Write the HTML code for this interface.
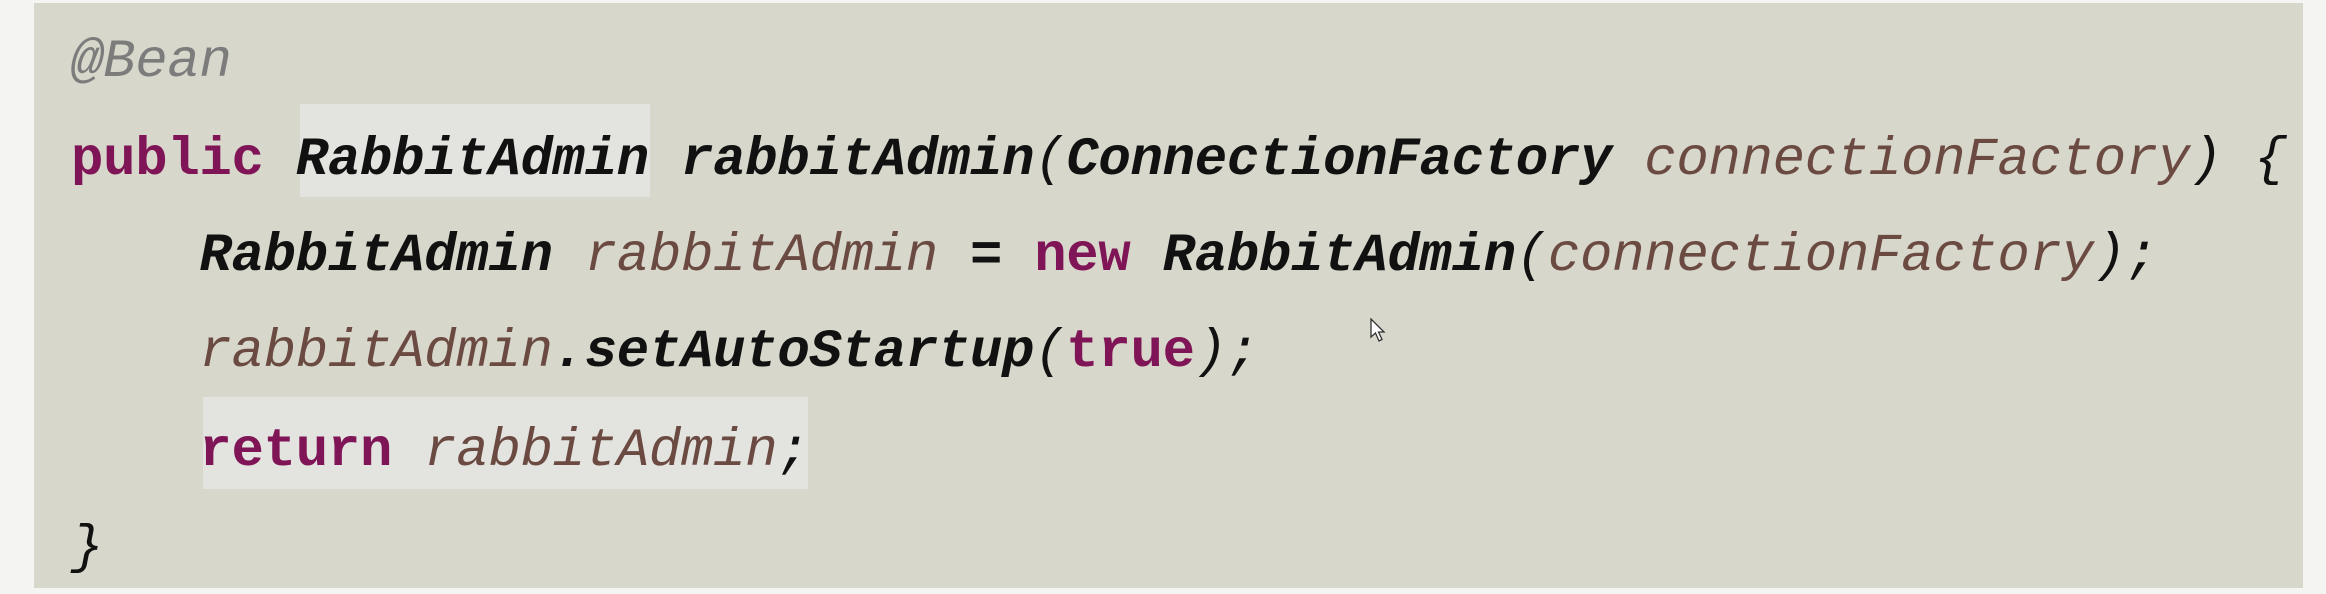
<!DOCTYPE html>
<html><head><meta charset="utf-8"><style>
html,body{margin:0;padding:0;}
body{width:2326px;height:594px;background:#f4f4f2;position:relative;overflow:hidden;}
#panel{position:absolute;left:34px;top:3px;width:2269px;height:585px;background:#d7d7cb;}
.hl{position:absolute;background:#e3e3df;}
.ln{position:absolute;left:71px;font-family:"Liberation Mono",monospace;font-size:54px;line-height:54px;white-space:pre;color:#111;font-weight:bold;letter-spacing:-0.3px;}
.k{color:#7f1456;font-style:normal;font-weight:bold;}
.t{font-style:italic;font-weight:bold;color:#111;}
.f{font-style:italic;font-weight:normal;color:#6b4a42;}
.a{font-style:italic;font-weight:normal;color:#7c7c7c;}
.p{font-style:italic;font-weight:normal;color:#111;}
</style></head><body>
<div id="panel"></div>
<div class="hl" style="left:300px;top:104px;width:350px;height:93px;"></div>
<div class="hl" style="left:203px;top:397px;width:605px;height:92px;"></div>
<div class="ln" style="top:36px;"><span class="a">@Bean</span></div>
<div class="ln" style="top:134px;"><span class="k">public</span> <span class="t">RabbitAdmin</span> <span class="t">rabbitAdmin</span><span class="p">(</span><span class="t">ConnectionFactory</span> <span class="f">connectionFactory</span><span class="p">) {</span></div>
<div class="ln" style="top:230px;">    <span class="t">RabbitAdmin</span> <span class="f">rabbitAdmin</span> <span style="font-weight:bold">=</span> <span class="k">new</span> <span class="t">RabbitAdmin</span><span class="p">(</span><span class="f">connectionFactory</span><span class="p">);</span></div>
<div class="ln" style="top:326px;">    <span class="f">rabbitAdmin</span><span class="t">.setAutoStartup</span><span class="p">(</span><span class="k">true</span><span class="p">);</span></div>
<div class="ln" style="top:425px;">    <span class="k">return</span> <span class="f">rabbitAdmin</span><span class="p">;</span></div>
<div class="ln" style="top:522px;"><span class="p">}</span></div>
<svg style="position:absolute;left:1370px;top:318px" width="20" height="26" viewBox="0 0 20 26"><path d="M1 1 L1 19 L5.5 15 L9 23 L12 21.5 L8.5 14 L14 14 Z" fill="#fff" stroke="#333" stroke-width="1.3"/></svg>
</body></html>
